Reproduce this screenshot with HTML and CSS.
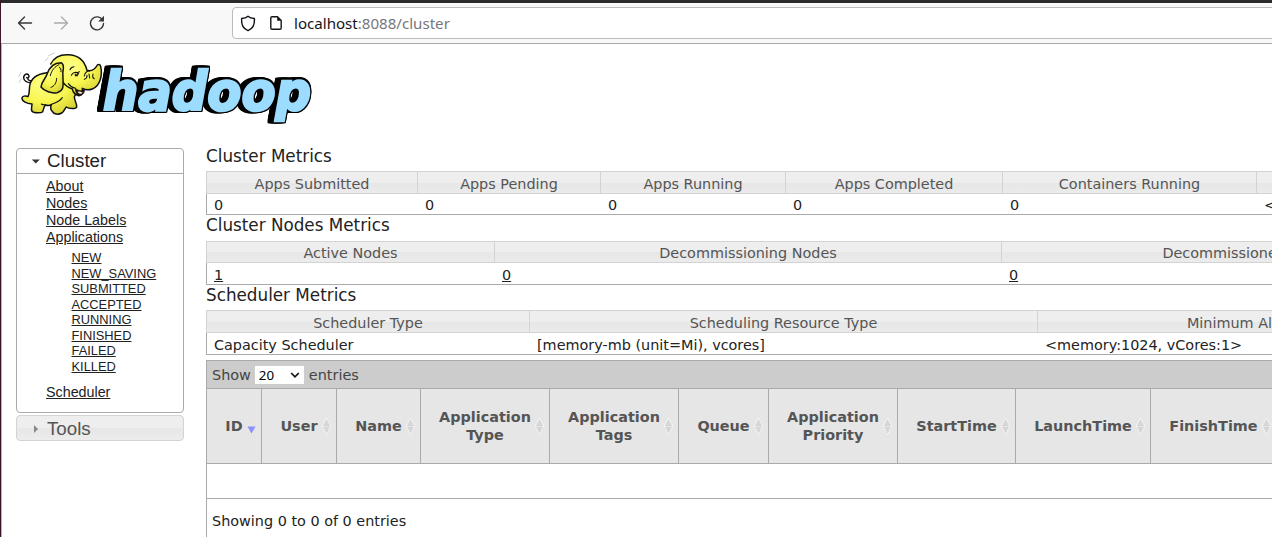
FILE: index.html
```
<!DOCTYPE html>
<html lang="en">
<head>
<meta charset="utf-8">
<title>All Applications</title>
<link rel="stylesheet" href="styles.css">
</head>
<body>
<svg class="defs" width="0" height="0">
  <defs>
    <g id="sort">
      <path d="M4.5 .5L8.5 8H.5zM4.5 16.500L.5 9h8z" fill="#d6d6d6"/>
      <path d="M4.5 0L.3 8 4.5 16.800 8.700 8z" fill="none" stroke="#fff" stroke-width=".9" stroke-dasharray="1.600 .7"/>
    </g>
  </defs>
</svg>
<div class="window">
  <header class="toolbar">
    <nav class="nav">
      <svg width="16" height="16" viewBox="0 0 16 16"><path d="M14.5 8H1.8M7.5 2L1.5 8l6 6" class="ink"/></svg>
      <svg width="16" height="16" viewBox="0 0 16 16" class="dim"><path d="M1.5 8h12.7M8.5 2l6 6-6 6" class="ink"/></svg>
      <svg width="16" height="16" viewBox="0 0 16 16"><path d="M13.8 5.4A6.5 6.5 0 1 0 14.5 8.5" class="ink"/><path d="M15 .8v5.8H9.2z" fill="#38383d"/></svg>
    </nav>
    <div class="urlbar">
      <svg width="16" height="17" viewBox="0 0 16 17"><path d="M8 1.2C6.4 2.6 3.9 3.3 1.6 3.5 1.2 9 3.5 13.900 8 15.700c4.500-1.800 6.800-6.700 6.400-12.200C12.100 3.300 9.600 2.600 8 1.200z" class="url-ink"/></svg>
      <svg width="12" height="14" viewBox="0 0 12 14"><path d="M2 .8h5.500L11.200 4.500V12c0 .7-.5 1.200-1.200 1.200H2C1.300 13.200.8 12.700.8 12V2C.8 1.300 1.300.8 2 .8z" class="url-ink"/><path d="M7.200.8v4h4z" fill="#15141a"/></svg>
      <span class="url">localhost<span class="url-rest">:8088/cluster</span></span>
    </div>
  </header>
  <div class="page">
    <div class="brand">
      <svg width="304" height="84" viewBox="14 48 304 84">
        <defs>
          <radialGradient id="skin" cx=".4" cy=".3" r=".75"><stop offset="0" stop-color="#ffff8a"/><stop offset=".55" stop-color="#f8f650"/><stop offset="1" stop-color="#d6d234"/></radialGradient>
        </defs>
        <text x="103" y="110" textLength="208" lengthAdjust="spacingAndGlyphs" class="word">hadoop</text>
        <g transform="translate(16 50) scale(.3333)" fill="url(#skin)" stroke="#111" stroke-width="4.500" stroke-linejoin="round" stroke-linecap="round">
          <path d="M48 99C34 98 24 92 23 84c-1-9 8-15 14-10 5 5 0 12-5 9M48 93c-7 0-13-4-13-9" fill="none"/>
          <path d="M92 68C62 72 44 86 41 108c-2 14 0 24-5 32-8-4-18-2-18 5 0 9 14 16 30 17 0 8-4 16 0 22 5 6 28 6 32 1 3-7 3-14 8-20 6 2 13 2 18-1-3 8-3 15 3 20 4 9 18 11 28 5 8-4 8-12 14-18 8 6 28 7 31 0 1-11-6-17-7-30l10-22-50-56z"/>
          <path d="M104 42c9-18 28-29 52-28 34 1 51 22 57 47 12 3 24-3 31-16 4-3 9-1 10 4 6 26-1 59-25 68-11 4-23 2-30-2 1 12-3 20-10 22-12-2-18-8-20-20-14-5-28-17-34-30"/>
          <path d="M135 38c-24 0-36 16-42 35-4 13-17 22-18 38 10 13 32 20 48 17 10-3 17-9 18-19 2-20-3-36 1-53 1-9-1-15-7-18z"/>
          <path d="M103 77c4-18 14-27 26-33M105 112c9-2 17-13 17-27M130 52c4 2 6 7 5 13" fill="none" stroke-width="3"/>
          <path d="M178 115c10 9 21 9 28 2 0 11-5 18-13 20-9-1-15-9-15-22z" fill="#21120c" stroke-width="2"/>
          <path d="M185 125c4 7 11 8 15 3-5-3-10-5-15-3z" fill="#f4e8dc" stroke="none"/>
          <path d="M162 59c3-6 8-9 12-9M166 76c5-9 14-12 22-5l-6 3M184 68l6-3M178 72v5h7M205 78c2-10 9-15 15-15M219 72l2 12M213 76c1 7-3 10-8 12M231 72c-2 9 0 13 4 14M157 101c5 7 11 12 21 14M88 164c-4 1-9 0-12-2M106 163c12-4 25-8 33-20" fill="none" stroke-width="3.200"/>
          <path d="M88 33l9-10M98 17l17-8M8 80l7-13M15 87l-5 10" fill="none" stroke="#aaa" stroke-width="2"/>
        </g>
      </svg>
    </div>
    <div class="layout">
      <aside class="side">
        <section class="panel">
          <h3 class="panel-head"><svg width="10" height="5" viewBox="0 0 10 5"><path d="M.8.500h8L4.800 4.500z" fill="#333"/></svg><span>Cluster</span></h3>
          <ul class="menu">
            <li><a>About</a></li>
            <li><a>Nodes</a></li>
            <li><a>Node Labels</a></li>
            <li><a>Applications</a>
              <ul class="submenu">
                <li><a>NEW</a></li>
                <li><a>NEW_SAVING</a></li>
                <li><a>SUBMITTED</a></li>
                <li><a>ACCEPTED</a></li>
                <li><a>RUNNING</a></li>
                <li><a>FINISHED</a></li>
                <li><a>FAILED</a></li>
                <li><a>KILLED</a></li>
              </ul>
            </li>
            <li><a>Scheduler</a></li>
          </ul>
        </section>
        <h3 class="tools"><svg width="10" height="8" viewBox="0 0 10 8"><path d="M3 0l4 4-4 4z" fill="#888"/></svg><span>Tools</span></h3>
      </aside>
      <main class="content">
        <h2 class="title">Cluster Metrics</h2>
        <div class="metrics cluster">
          <div class="th">Apps Submitted</div><div class="th">Apps Pending</div><div class="th">Apps Running</div><div class="th">Apps Completed</div><div class="th">Containers Running</div><div class="th"></div>
          <div class="td">0</div><div class="td">0</div><div class="td">0</div><div class="td">0</div><div class="td">0</div><div class="td">&lt;</div>
        </div>
        <h2 class="title nodes-title">Cluster Nodes Metrics</h2>
        <div class="metrics nodes">
          <div class="th">Active Nodes</div><div class="th">Decommissioning Nodes</div><div class="th">Decommissioned Nodes</div>
          <div class="td"><a>1</a></div><div class="td"><a>0</a></div><div class="td"><a>0</a></div>
        </div>
        <h2 class="title sched-title">Scheduler Metrics</h2>
        <div class="metrics sched">
          <div class="th">Scheduler Type</div><div class="th">Scheduling Resource Type</div><div class="th">Minimum Allocation</div>
          <div class="td">Capacity Scheduler</div><div class="td">[memory-mb (unit=Mi), vcores]</div><div class="td">&lt;memory:1024, vCores:1&gt;</div>
        </div>
        <div class="apps">
          <div class="length"><span>Show</span><span class="select">20<svg width="10" height="6" viewBox="0 0 10 6"><path d="M1.200 1L5 4.800 8.800 1" fill="none" stroke="#111" stroke-width="1.700"/></svg></span><span>entries</span></div>
          <div class="cols">
            <div class="col">ID<svg class="sort down" width="9" height="8" viewBox="0 0 9 8"><path d="M.5.500h8L4.500 7.500z" fill="#8d91ff"/></svg></div>
            <div class="col">User<svg class="sort" width="9" height="17"><use href="#sort"/></svg></div>
            <div class="col">Name<svg class="sort" width="9" height="17"><use href="#sort"/></svg></div>
            <div class="col">Application<br>Type<svg class="sort" width="9" height="17"><use href="#sort"/></svg></div>
            <div class="col">Application<br>Tags<svg class="sort" width="9" height="17"><use href="#sort"/></svg></div>
            <div class="col">Queue<svg class="sort" width="9" height="17"><use href="#sort"/></svg></div>
            <div class="col">Application<br>Priority<svg class="sort" width="9" height="17"><use href="#sort"/></svg></div>
            <div class="col">StartTime<svg class="sort" width="9" height="17"><use href="#sort"/></svg></div>
            <div class="col">LaunchTime<svg class="sort" width="9" height="17"><use href="#sort"/></svg></div>
            <div class="col">FinishTime<svg class="sort" width="9" height="17"><use href="#sort"/></svg></div>
          </div>
          <div class="empty"></div>
          <div class="info">Showing 0 to 0 of 0 entries</div>
        </div>
      </main>
    </div>
  </div>
</div>
</body>
</html>
```

FILE: styles.css
```
* { box-sizing: border-box; }
html, body { margin: 0; height: 537px; overflow: hidden; }
body { background: #fff; color: #222; font-family: "DejaVu Sans", sans-serif; font-size: 14.400px; }
h2, h3, ul { margin: 0; padding: 0; font-weight: normal; list-style: none; }
svg { display: block; flex: none; }
.defs { position: absolute; }
.window { height: 537px; border-top: 3px solid #2b2b2b; border-left: 1px solid #3a1429; overflow: hidden; }

.toolbar { display: flex; height: 41px; background: #f8f8f8; border-bottom: 1px solid #a9a9a9; border-top: 1px solid #fcfcfc; padding: 3px 0 0 16px; }
.nav { display: flex; flex: none; gap: 20px; width: 215px; padding-top: 8px; }
.ink { fill: none; stroke: #38383d; stroke-width: 1.400; stroke-linecap: round; stroke-linejoin: round; }
.dim { opacity: .4; }
.urlbar { display: flex; align-items: center; flex: none; width: 1060px; height: 32px; border: 1px solid #bcbcbe; border-radius: 4px; background: #fff; padding-left: 7px; }
.url-ink { fill: none; stroke: #15141a; stroke-width: 1.400; stroke-linejoin: round; }
.urlbar svg + svg { margin-left: 14px; }
.url { margin-left: 12px; font: 15.100px "Noto Sans", sans-serif; color: #15141a; white-space: nowrap; }
.url-rest { color: #77777c; }

.page { border-left: 1px solid #b5b5b5; height: 493px; }
.brand { height: 104px; padding: 4px 0 0 12px; }
.word {
  font: italic bold 53px "DejaVu Sans", sans-serif;
  fill: #9bdcff; stroke: #9bdcff; stroke-width: 2.500px; stroke-linejoin: miter;
  filter: drop-shadow(1.500px 0 0 #000) drop-shadow(-2px 0 0 #000) drop-shadow(0 1.500px 0 #000) drop-shadow(0 -1.500px 0 #000) drop-shadow(-4px 0 0 #000);
}

.layout { display: flex; gap: 22px; padding-left: 14px; }
.side { flex: none; width: 168px; font-family: "Liberation Sans", sans-serif; }
.panel { height: 265px; border: 1px solid #aaa; border-radius: 4px; }
.panel-head, .tools { display: flex; align-items: center; gap: 6px; padding-left: 14px; font-size: 18.700px; }
.panel-head { height: 25px; border-bottom: 1px solid #aaa; color: #212121; }
.tools { height: 26px; margin-top: 2px; padding-top: 2px; border: 1px solid #d3d3d3; border-radius: 4px; color: #555; background: linear-gradient(#eeeeee 50%, #e6e6e6 50%, #ececec); }
.menu { padding: 4px 0 0 29px; font-size: 14.300px; line-height: 17px; }
.submenu { padding: 4px 0 10px 25.500px; font-size: 12.850px; line-height: 15.500px; }
a { text-decoration: underline; color: #222; }

.content { flex: none; width: 1300px; margin-top: -4px; }
.title { height: 27px; font-size: 16.800px; line-height: 25px; }
.nodes-title { height: 26px; line-height: 21px; }
.sched-title { height: 25px; line-height: 21px; }
.metrics { display: grid; grid-template-rows: 23px 21px; border-bottom: 1px solid #aaa; height: 44px; box-shadow: inset 1px 0 #aaa; }
.cluster { grid-template-columns: 211px 183px 185px 217px 254px 250px; grid-template-rows: 23px 20px; }
.nodes { grid-template-columns: 288px 507px 495px; grid-template-rows: 22px 21px; }
.sched { grid-template-columns: 323px 508px 441px; height: 45px; }
.th { border: 1px solid #d3d3d3; border-right: 0; text-align: center; color: #555; line-height: 24px; background: linear-gradient(#eeeeee 50%, #e6e6e6 50%, #ebebeb); white-space: nowrap; }
.nodes .th { line-height: 22px; }
.td { padding-left: 8px; line-height: 25px; white-space: nowrap; }
.cluster .td { line-height: 23px; }

.apps { margin-top: 5px; border: 1px solid #aaa; height: 220px; }
.length { display: flex; align-items: center; height: 27px; background: #ccc; color: #444; padding-left: 5px; }
.select { display: flex; align-items: center; justify-content: space-between; width: 49px; height: 18px; margin: 0 5px 0 4px; background: #fff; color: #000; padding: 0 4px; font: 13.300px "Noto Sans", sans-serif; }
.cols { display: grid; grid-template-columns: 55px 75px 84px 129px 129px 90px 129px 118px 135px 126px; height: 76px; margin-left: -1px; background: #e6e6e6; border-top: 1px solid #aaa; border-bottom: 1px solid #aaa; }
.col { position: relative; display: flex; align-items: center; justify-content: center; text-align: center; border-left: 1px solid #aaa; font-weight: bold; color: #555; line-height: 18px; }
.sort { position: absolute; right: 5px; top: 29px; }
.down { top: 37px; }
.empty { height: 35px; border-bottom: 1px solid #aaa; }
.info { padding-left: 5px; line-height: 44px; }
```
